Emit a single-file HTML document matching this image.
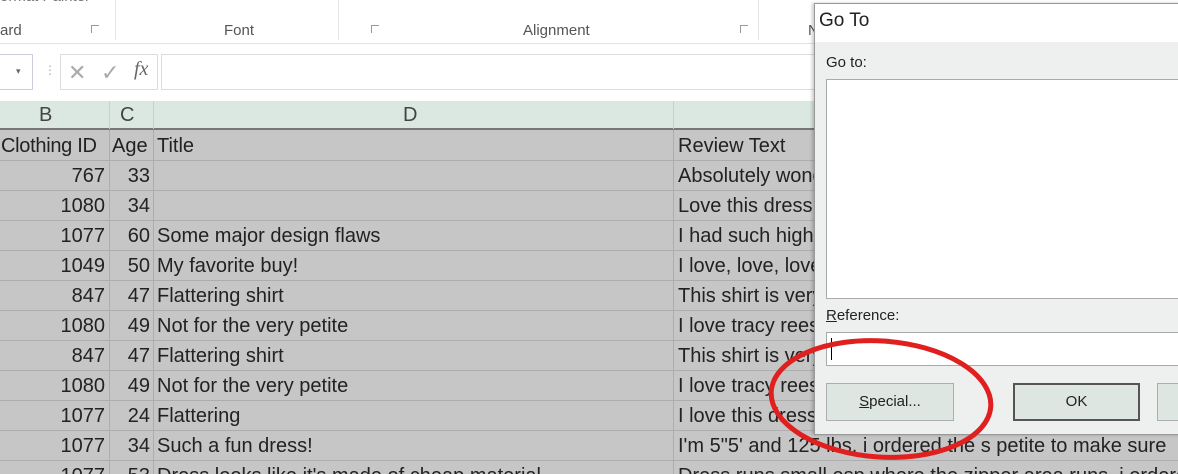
<!DOCTYPE html>
<html><head><style>
*{margin:0;padding:0;box-sizing:border-box}
html,body{width:1178px;height:474px;overflow:hidden}
body{background:#fff;font-family:"Liberation Sans",sans-serif;position:relative}
.a{position:absolute}
.rib{color:#555;font-size:15px}
.cell{position:absolute;font-size:20px;color:#222;white-space:nowrap;line-height:30px}
.r{text-align:right}
.h{position:absolute;left:0;width:1178px;height:1px;background:#adadad}
</style></head><body>
<div class="a rib" style="left:0;top:-12px;color:#777">ormat Painter</div>
<div class="a rib" style="left:0;top:22px">ard</div>
<div class="a rib" style="left:224px;top:22px">Font</div>
<div class="a rib" style="left:523px;top:22px">Alignment</div>
<div class="a rib" style="left:808px;top:22px">N</div>
<div class="a" style="left:91px;top:25px;width:8px;height:8px;border-left:1px solid #999;border-top:1px solid #999"></div>
<div class="a" style="left:371px;top:25px;width:8px;height:8px;border-left:1px solid #999;border-top:1px solid #999"></div>
<div class="a" style="left:740px;top:25px;width:8px;height:8px;border-left:1px solid #999;border-top:1px solid #999"></div>
<div class="a" style="left:115px;top:0;width:1px;height:40px;background:#e6e6e6"></div>
<div class="a" style="left:338px;top:0;width:1px;height:40px;background:#e6e6e6"></div>
<div class="a" style="left:758px;top:0;width:1px;height:40px;background:#e6e6e6"></div>
<div class="a" style="left:0;top:43px;width:1178px;height:1px;background:#dde5e2"></div>
<div class="a" style="left:-2px;top:54px;width:35px;height:36px;border:1px solid #ccd;background:#fff"></div>
<div class="a" style="left:16px;top:66px;font-size:9px;color:#666">▾</div>
<div class="a" style="left:44px;top:63px;color:#aaa;font-size:12px">⋮</div>
<div class="a" style="left:60px;top:54px;width:98px;height:36px;border:1px solid #d8dedb"></div>
<div class="a" style="left:68px;top:60px;font-size:22px;color:#aaa">✕</div>
<div class="a" style="left:101px;top:60px;font-size:22px;color:#aaa">✓</div>
<div class="a" style="left:161px;top:54px;width:1020px;height:36px;border:1px solid #d8dedb;background:#fff"></div>
<div class="a" style="left:134px;top:58px;font-size:20px;color:#666;font-family:'Liberation Serif',serif;font-style:italic">fx</div>
<div class="a" style="left:0;top:101px;width:1178px;height:28px;background:#dae8e1"></div>
<div class="a" style="left:0;top:128px;width:1178px;height:2px;background:#777"></div>
<div class="a" style="left:39px;top:104px;font-size:20px;color:#444">B</div>
<div class="a" style="left:120px;top:104px;font-size:20px;color:#444">C</div>
<div class="a" style="left:403px;top:104px;font-size:20px;color:#444">D</div>
<div class="a" style="left:109px;top:101px;width:1px;height:28px;background:#c8d2cc"></div>
<div class="a" style="left:153px;top:101px;width:1px;height:28px;background:#c8d2cc"></div>
<div class="a" style="left:673px;top:101px;width:1px;height:28px;background:#c8d2cc"></div>
<div class="a" style="left:0;top:130px;width:1178px;height:344px;background:#c6c6c6"></div>
<div class="a" style="left:109px;top:130px;width:1px;height:344px;background:#adadad"></div>
<div class="a" style="left:153px;top:130px;width:1px;height:344px;background:#adadad"></div>
<div class="a" style="left:673px;top:130px;width:1px;height:344px;background:#adadad"></div>
<div class="h" style="top:160px"></div><div class="h" style="top:190px"></div><div class="h" style="top:220px"></div><div class="h" style="top:250px"></div><div class="h" style="top:280px"></div><div class="h" style="top:310px"></div><div class="h" style="top:340px"></div><div class="h" style="top:370px"></div><div class="h" style="top:400px"></div><div class="h" style="top:430px"></div><div class="h" style="top:460px"></div>
<div class="cell" style="left:1px;top:131px;letter-spacing:-0.3px">Clothing ID</div><div class="cell" style="left:112px;top:131px">Age</div><div class="cell" style="left:157px;top:131px">Title</div><div class="cell" style="left:678px;top:131px">Review Text</div>
<div class="cell r" style="left:0;width:105px;top:161px">767</div><div class="cell r" style="left:110px;width:40px;top:161px">33</div><div class="cell" style="left:678px;top:161px">Absolutely wonderful</div>
<div class="cell r" style="left:0;width:105px;top:191px">1080</div><div class="cell r" style="left:110px;width:40px;top:191px">34</div><div class="cell" style="left:678px;top:191px">Love this dress!</div>
<div class="cell r" style="left:0;width:105px;top:221px">1077</div><div class="cell r" style="left:110px;width:40px;top:221px">60</div><div class="cell" style="left:157px;top:221px">Some major design flaws</div><div class="cell" style="left:678px;top:221px">I had such high</div>
<div class="cell r" style="left:0;width:105px;top:251px">1049</div><div class="cell r" style="left:110px;width:40px;top:251px">50</div><div class="cell" style="left:157px;top:251px">My favorite buy!</div><div class="cell" style="left:678px;top:251px">I love, love, love</div>
<div class="cell r" style="left:0;width:105px;top:281px">847</div><div class="cell r" style="left:110px;width:40px;top:281px">47</div><div class="cell" style="left:157px;top:281px">Flattering shirt</div><div class="cell" style="left:678px;top:281px">This shirt is very</div>
<div class="cell r" style="left:0;width:105px;top:311px">1080</div><div class="cell r" style="left:110px;width:40px;top:311px">49</div><div class="cell" style="left:157px;top:311px">Not for the very petite</div><div class="cell" style="left:678px;top:311px">I love tracy reese</div>
<div class="cell r" style="left:0;width:105px;top:341px">847</div><div class="cell r" style="left:110px;width:40px;top:341px">47</div><div class="cell" style="left:157px;top:341px">Flattering shirt</div><div class="cell" style="left:678px;top:341px">This shirt is very</div>
<div class="cell r" style="left:0;width:105px;top:371px">1080</div><div class="cell r" style="left:110px;width:40px;top:371px">49</div><div class="cell" style="left:157px;top:371px">Not for the very petite</div><div class="cell" style="left:678px;top:371px">I love tracy reese</div>
<div class="cell r" style="left:0;width:105px;top:401px">1077</div><div class="cell r" style="left:110px;width:40px;top:401px">24</div><div class="cell" style="left:157px;top:401px">Flattering</div><div class="cell" style="left:678px;top:401px">I love this dress</div>
<div class="cell r" style="left:0;width:105px;top:431px">1077</div><div class="cell r" style="left:110px;width:40px;top:431px">34</div><div class="cell" style="left:157px;top:431px">Such a fun dress!</div><div class="cell" style="left:678px;top:431px">I'm 5"5' and 125 lbs. i ordered the s petite to make sure</div>
<div class="cell r" style="left:0;width:105px;top:461px">1077</div><div class="cell r" style="left:110px;width:40px;top:461px">53</div><div class="cell" style="left:157px;top:461px">Dress looks like it's made of cheap material</div><div class="cell" style="left:678px;top:461px">Dress runs small esp where the zipper area runs. i ordered</div>
<div class="a" style="left:814px;top:3px;width:370px;height:432px;background:#eef0ef;border:1px solid #999;box-shadow:-2px 0 3px rgba(0,0,0,.2)"></div>
<div class="a" style="left:815px;top:4px;width:370px;height:38px;background:#fff"></div>
<div class="a" style="left:819px;top:10px;font-size:19px;color:#222">Go To</div>
<div class="a" style="left:826px;top:54px;font-size:15px;color:#222">Go to:</div>
<div class="a" style="left:826px;top:79px;width:360px;height:220px;background:#fff;border:1px solid #aaa"></div>
<div class="a" style="left:826px;top:307px;font-size:15px;color:#222"><u>R</u>eference:</div>
<div class="a" style="left:826px;top:332px;width:360px;height:34px;background:#fff;border:1px solid #aaa"></div>
<div class="a" style="left:831px;top:338px;width:1px;height:22px;background:#000"></div>
<div class="a" style="left:826px;top:383px;width:128px;height:38px;background:#dde6e1;border:1px solid #adadad;font-size:15px;text-align:center;line-height:36px;color:#222"><u>S</u>pecial...</div>
<div class="a" style="left:1013px;top:383px;width:127px;height:38px;background:#dde6e1;border:2px solid #555;font-size:15px;text-align:center;line-height:34px;color:#222">OK</div>
<div class="a" style="left:1157px;top:383px;width:40px;height:38px;background:#dde6e1;border:1px solid #adadad"></div>
<svg class="a" style="left:0;top:0" width="1178" height="474"><ellipse cx="881" cy="399" rx="110" ry="58" transform="rotate(4 881 399)" fill="none" stroke="#e0201f" stroke-width="5"/></svg>
</body></html>
